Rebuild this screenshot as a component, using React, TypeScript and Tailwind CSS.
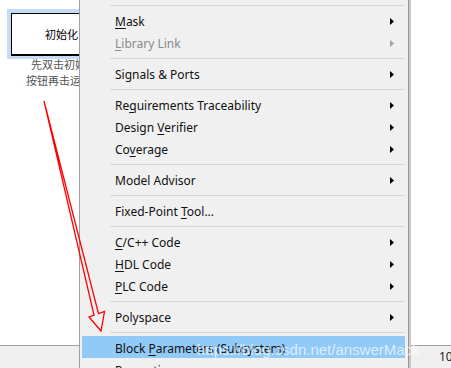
import React from "react";

type Item = { label: React.ReactNode; arrow?: boolean; disabled?: boolean; active?: boolean } | "sep";

const U = ({ children }: { children: React.ReactNode }) => (
  <span className="underline underline-offset-[2px] decoration-[1px]">{children}</span>
);

const items: Item[] = [
  "sep",
  { label: <><U>M</U>ask</>, arrow: true },
  { label: <><U>L</U>ibrary Link</>, arrow: true, disabled: true },
  "sep",
  { label: <>Signals &amp; Ports</>, arrow: true },
  "sep",
  { label: <>Re<U>q</U>uirements Traceability</>, arrow: true },
  { label: <>Design <U>V</U>erifier</>, arrow: true },
  { label: <>Co<U>v</U>erage</>, arrow: true },
  "sep",
  { label: <>Model Advisor</>, arrow: true },
  "sep",
  { label: <>Fixed-Point <U>T</U>ool...</> },
  "sep",
  { label: <><U>C</U>/C++ Code</>, arrow: true },
  { label: <><U>H</U>DL Code</>, arrow: true },
  { label: <><U>P</U>LC Code</>, arrow: true },
  "sep",
  { label: <>Polyspace</>, arrow: true },
  "sep",
  { label: <>Block <U>P</U>arameters (Subsystem)</>, active: true },
  { label: <>Properties...</> },
];

function Arrow({ gray }: { gray?: boolean }) {
  return (
    <svg width="4" height="7" viewBox="0 0 4 7" className="shrink-0 translate-y-[1px]">
      <polygon points="0,0 4,3.5 0,7" fill={gray ? "#a0a0a0" : "#000"} />
    </svg>
  );
}

export default function App() {
  return (
    <div
      className="relative flex h-[368px] w-[451px] overflow-hidden bg-white"
      style={{ fontFamily: '"Noto Sans", "Noto Sans CJK SC", sans-serif' }}
    >
      {/* left canvas */}
      <div className="flex w-[79px] shrink-0 flex-col overflow-hidden">
        <div className="flex-1 bg-white pl-[7px] pt-[9px]">
          <div className="w-[109px] bg-[#c6dcf4] px-[4px] pb-[3px] pt-[4px]">
            <div
              className="flex h-[43px] items-center justify-center border border-b-2 border-black bg-white text-[11px] text-black"
              style={{ fontFamily: '"Noto Sans CJK SC", sans-serif' }}
            >
              初始化
            </div>
          </div>
          <div
            className="mt-[-3px] whitespace-nowrap text-[11px] leading-[16px] text-[#555]"
            style={{ fontFamily: '"Noto Sans CJK SC", sans-serif' }}
          >
            <div className="pl-[24px]">先双击初始化</div>
            <div className="pl-[19px]">按钮再击运行仿真</div>
          </div>
        </div>
        <div className="h-[23px] border-t border-[#a0a0a0] bg-[#f0f0f0]" />
      </div>

      {/* context menu */}
      <div className="flex w-[332px] shrink-0">
        <div className="flex flex-1 flex-col border-l border-r border-l-[#a0a0a0] border-r-[#979797] bg-[#f0f0f0] pl-[2px] pr-[3px]">
          <div className="h-[1px]" />
          {items.map((it, i) =>
            it === "sep" ? (
              <div key={i} className="pb-[3px] pl-[28px] pt-[5px]">
                <div className="h-[1px] bg-[#d7d7d7]" />
              </div>
            ) : (
              <div
                key={i}
                className={`flex h-[22px] shrink-0 items-center justify-between pl-[33px] pr-[11px] text-[12px] ${
                  it.active ? "bg-[#91c9f7]" : ""
                } ${it.disabled ? "text-[#8a8a8a]" : "text-[#111]"}`}
              >
                <span className="whitespace-nowrap pt-[3px] leading-none">{it.label}</span>
                {it.arrow && <Arrow gray={it.disabled} />}
              </div>
            )
          )}
        </div>
        <div className="w-[2px] bg-[#c8c8c8]" />
      </div>

      {/* right canvas */}
      <div className="flex flex-1 flex-col">
        <div className="flex-1 bg-white" />
        <div className="flex h-[23px] items-start border-t border-[#a0a0a0] bg-[#f0f0f0] pl-[28px] pt-[2px] text-[12px] text-[#222]">
          10
        </div>
      </div>

      {/* watermark */}
      <div
        className="pointer-events-none absolute left-[197px] top-[339px] whitespace-nowrap text-[15px] text-white/70"
        style={{ fontFamily: '"Liberation Sans", Arial, sans-serif' }}
      >
        https://blog.csdn.net/answerMack
      </div>

      {/* red arrow annotation */}
      <svg className="pointer-events-none absolute left-0 top-0" width="451" height="368">
        <polygon
          points="44,101 94,315.2 89,317 101,331 104.5,311.5 98.5,313.6"
          fill="none"
          stroke="#ff0000"
          strokeWidth="1.3"
          strokeLinejoin="miter"
        />
      </svg>
    </div>
  );
}
